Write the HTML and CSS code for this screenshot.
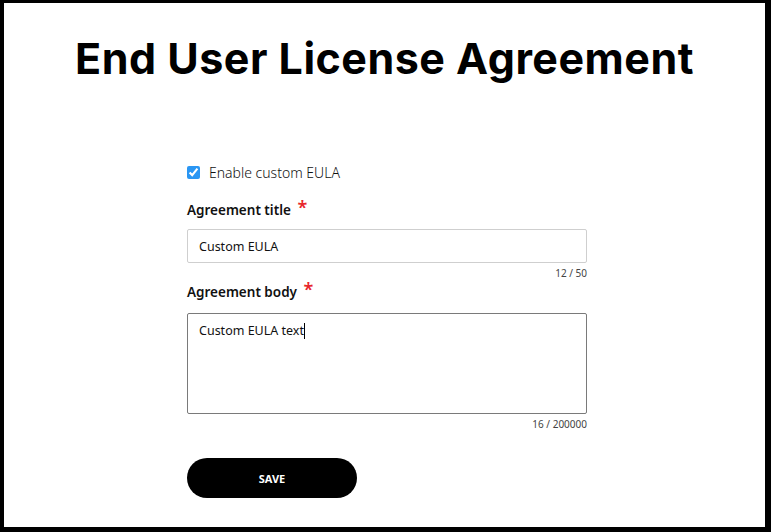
FILE: index.html
```html
<!DOCTYPE html>
<html>
<head>
<meta charset="utf-8">
<link rel="stylesheet" href="styles.css">
</head>
<body>
<div class="frame">
  <h1 class="title">End User License Agreement</h1>
  <form class="form">
    <label class="check">
      <input type="checkbox" checked>
      <span>Enable custom EULA</span>
    </label>
    <div class="field">
      <div class="label">Agreement title <span class="req">*</span></div>
      <div class="input">Custom EULA</div>
      <div class="count">12 / 50</div>
    </div>
    <div class="field field-body">
      <div class="label">Agreement body <span class="req">*</span></div>
      <div class="textarea">Custom EULA text<span class="caret"></span></div>
      <div class="count">16 / 200000</div>
    </div>
    <button type="button" class="save">SAVE</button>
  </form>
</div>
</body>
</html>
```
FILE: styles.css
```css
html, body {
  margin: 0;
  padding: 0;
  background: #000;
}
body {
  width: 771px;
  height: 532px;
  box-sizing: border-box;
  padding: 3px 6px 5px 4px;
}
.frame {
  background: #fff;
  height: 100%;
  display: flex;
  flex-direction: column;
  align-items: center;
  font-family: "Noto Sans", sans-serif;
  color: #111;
}
.title {
  margin: 29px 0 0 0;
  font-family: "Inter", sans-serif;
  font-weight: 700;
  font-size: 43px;
  line-height: 52px;
  letter-spacing: 0.5px;
  color: #000;
}
.form {
  width: 400px;
  margin-top: 78px;
  margin-left: 5px;
  display: flex;
  flex-direction: column;
}
.check {
  display: flex;
  align-items: center;
  gap: 9px;
  font-size: 14px;
  font-weight: 300;
  height: 20px;
}
.check input {
  margin: 0;
  width: 13px;
  height: 13px;
  accent-color: #2a96f3;
}
.field {
  display: flex;
  flex-direction: column;
}
.label {
  margin-top: 15px;
  font-size: 13.5px;
  font-weight: 600;
  line-height: 20px;
  color: #111;
}
.field-body .label {
  margin-top: -1px;
}
.req {
  color: #e8262c;
  font-size: 18px;
  margin-left: 3px;
  font-weight: 600;
  vertical-align: 1px;
}
.input {
  margin-top: 9px;
  height: 34px;
  box-sizing: border-box;
  border: 1px solid #cfcfcf;
  border-radius: 2px;
  padding: 0 11px;
  display: flex;
  align-items: center;
  font-size: 12.5px;
  color: #111;
}
.textarea {
  margin-top: 11px;
  height: 101px;
  box-sizing: border-box;
  border: 1px solid #7a7a7a;
  border-radius: 2px;
  padding: 8px 11px;
  font-size: 12.5px;
  line-height: 18px;
  color: #111;
}
.caret {
  display: inline-block;
  width: 1px;
  height: 16px;
  background: #000;
  vertical-align: -4px;
}
.count {
  text-align: right;
  font-size: 10px;
  line-height: 14px;
  margin-top: 3px;
  color: #444;
}
.save {
  margin-top: 27px;
  width: 170px;
  height: 40px;
  border: 0;
  border-radius: 20px;
  background: #000;
  color: #fff;
  font-family: "Noto Sans", sans-serif;
  font-weight: 700;
  font-size: 11px;
  cursor: pointer;
}
```
